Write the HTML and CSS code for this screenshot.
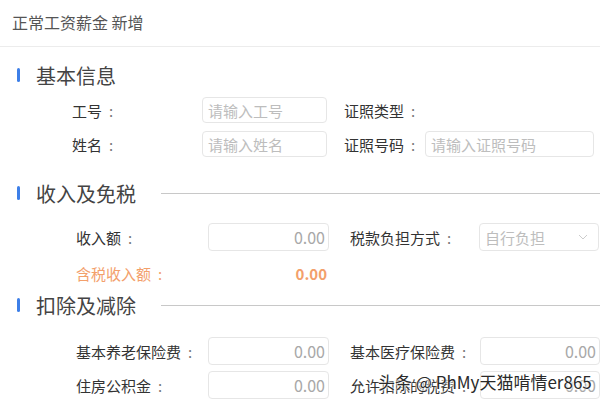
FILE: index.html
```html
<!DOCTYPE html>
<html lang="zh-CN">
<head>
    <meta charset="UTF-8">
    <title>正常工资薪金 新增</title>
    <link rel="stylesheet" href="styles.css">
</head>
<body>
    <div class="page">
        <div class="page-header">正常工资薪金 新增</div>

        <div class="section-head first">
            <span class="bar"></span>
            <span class="section-title">基本信息</span>
        </div>
        <div class="form-grid basic">
            <label class="field-label">工号<span class="colon">:</span></label>
            <div class="input"><span class="placeholder">请输入工号</span></div>
            <label class="field-label second">证照类型<span class="colon">:</span></label>
            <div></div>

            <label class="field-label">姓名<span class="colon">:</span></label>
            <div class="input"><span class="placeholder">请输入姓名</span></div>
            <label class="field-label second">证照号码<span class="colon">:</span></label>
            <div class="input"><span class="placeholder">请输入证照号码</span></div>
        </div>

        <div class="section-head">
            <span class="bar"></span>
            <span class="section-title">收入及免税</span>
            <span class="divider"></span>
        </div>
        <div class="form-grid money">
            <label class="field-label">收入额<span class="colon">:</span></label>
            <div class="input number">0.00</div>
            <label class="field-label second">税款负担方式<span class="colon">:</span></label>
            <div class="input select">
                <span class="placeholder">自行负担</span>
                <svg class="chevron" width="10" height="6" viewBox="0 0 10 6"><path d="M1 1l4 4 4-4" fill="none" stroke="#ccc" stroke-width="1"/></svg>
            </div>

            <label class="field-label orange">含税收入额<span class="colon">:</span></label>
            <div class="total">0.00</div>
        </div>

        <div class="section-head near">
            <span class="bar"></span>
            <span class="section-title">扣除及减除</span>
            <span class="divider"></span>
        </div>
        <div class="form-grid money deduct">
            <label class="field-label">基本养老保险费<span class="colon">:</span></label>
            <div class="input number">0.00</div>
            <label class="field-label second">基本医疗保险费<span class="colon">:</span></label>
            <div class="input number">0.00</div>

            <label class="field-label">住房公积金<span class="colon">:</span></label>
            <div class="input number">0.00</div>
            <label class="field-label second">允许扣除的税费<span class="colon">:</span></label>
            <div class="input number">0.00</div>
        </div>
    </div>

    <div class="watermark">头条 @ PhMy天猫啃情er865</div>
</body>
</html>
```

FILE: styles.css
```css
* {
    box-sizing: border-box;
}

body {
    margin: 0;
    font-family: "Noto Sans CJK SC", "Noto Sans", sans-serif;
    background: #fff;
    color: #333;
    overflow: hidden;
}

.page {
    width: 600px;
    height: 400px;
    overflow: hidden;
}

.page-header {
    height: 47px;
    padding: 10px 0 0 12px;
    font-size: 16px;
    line-height: 24px;
    color: #555;
    border-bottom: 1px solid #ececec;
}

.section-head {
    display: flex;
    align-items: center;
    height: 28px;
    padding-left: 17px;
    margin-top: 22px;
}

.section-head.first {
    margin-top: 14px;
}

.section-head.near {
    margin-top: 4px;
}

.section-head .bar {
    width: 3px;
    height: 14px;
    border-radius: 2px;
    background-color: #3d7fe8;
}

.section-title {
    margin-left: 16px;
    font-size: 20px;
    color: #444;
}

.divider {
    flex: 1;
    height: 1px;
    margin-left: 25px;
    background-color: #c8c8c8;
}

.form-grid {
    display: grid;
    align-items: center;
}

.form-grid.basic {
    margin-top: 8px;
    padding-left: 72px;
    grid-template-columns: 130px 125px 98px 169px;
    row-gap: 8px;
    grid-auto-rows: 26px;
}

.form-grid.basic .second {
    padding-left: 17px;
}

.form-grid.money {
    margin-top: 16px;
    padding-left: 76px;
    grid-template-columns: 132px 121px 150px 120px;
    row-gap: 8px;
    grid-auto-rows: 28px;
}

.form-grid.money .second {
    padding-left: 21px;
}

.form-grid.deduct {
    margin-top: 18px;
    row-gap: 6px;
    grid-template-columns: 132px 121px 151px 120px;
}

.field-label {
    font-size: 15px;
    color: #333;
    white-space: nowrap;
}

.colon {
    margin-left: 7px;
    color: #777;
}

.field-label.orange {
    color: #f3a06b;
}

.field-label.orange .colon {
    color: #f3a06b;
}

.input {
    height: 100%;
    display: flex;
    align-items: center;
    padding: 0 5px;
    border: 1px solid #e6e6e6;
    border-radius: 4px;
    font-size: 15px;
    background: #fff;
}

.placeholder {
    color: #bdbdbd;
}

.input.number {
    justify-content: flex-end;
    padding-right: 3px;
    color: #a8a8a8;
    font-size: 16px;
}

.input.select {
    justify-content: space-between;
    padding-right: 10px;
}

.total {
    text-align: right;
    padding-right: 2px;
    font-size: 15px;
    font-weight: bold;
    color: #f3a06b;
}

.watermark {
    position: absolute;
    left: 378px;
    top: 369px;
    font-size: 17px;
    color: #2a2a2a;
    text-shadow: 0 0 2px #fff, 0 0 2px #fff, 0 0 3px #fff;
    white-space: nowrap;
}
```
